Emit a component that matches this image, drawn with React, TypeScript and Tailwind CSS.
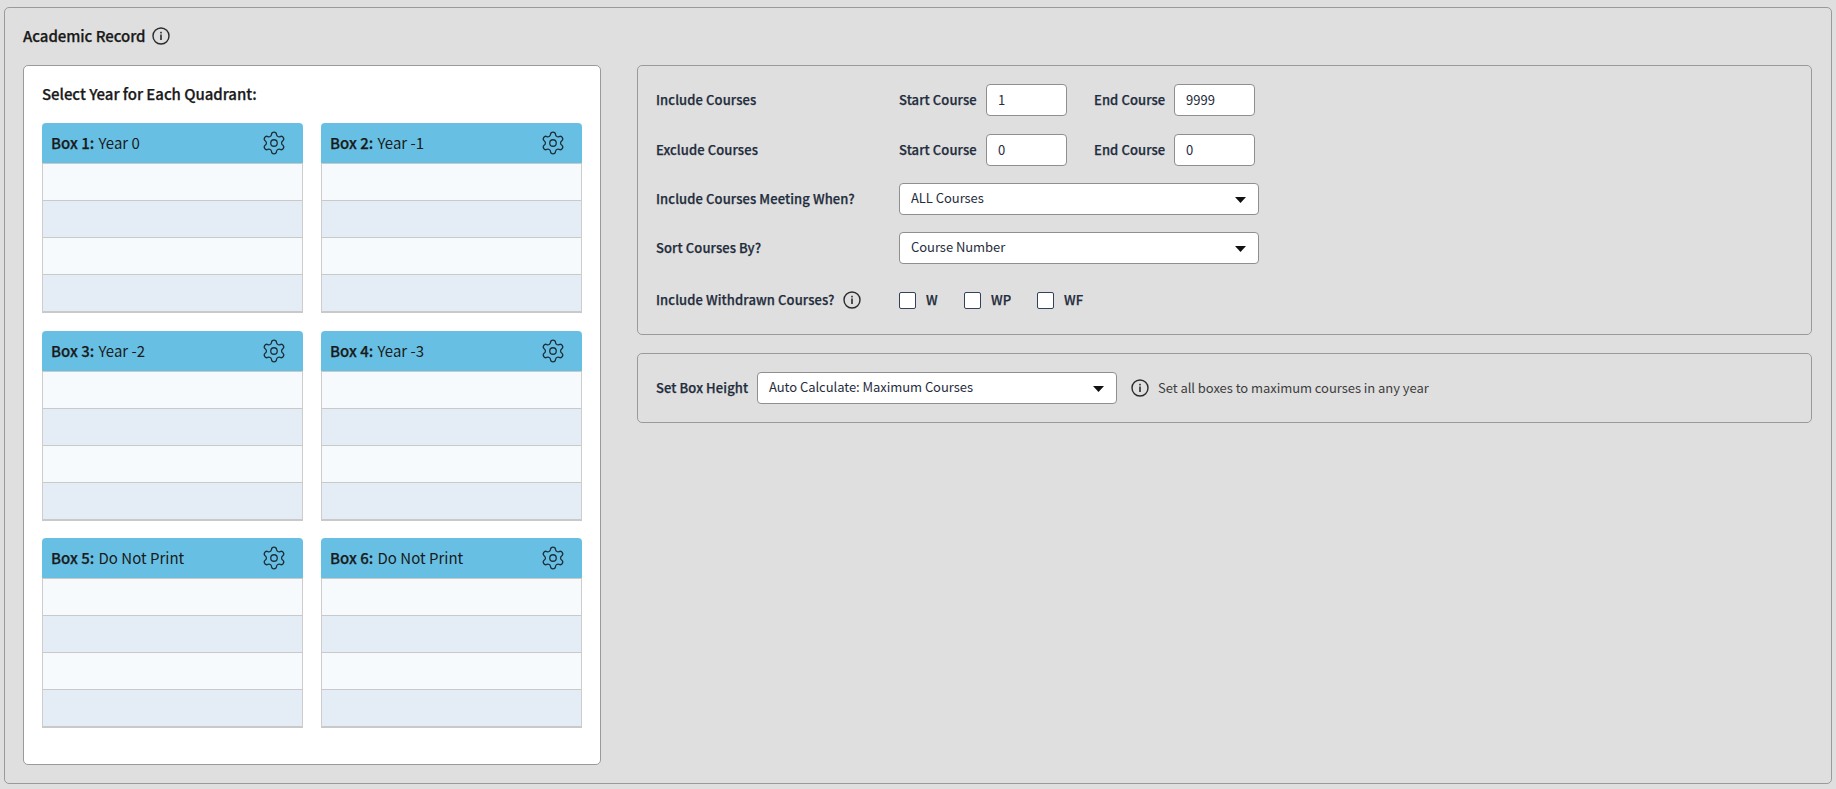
import React from 'react';
import { Settings } from 'lucide-react';

const font = 'font-["Noto_Sans_CJK_JP","Liberation_Sans",sans-serif]';

const boxes = [
  { name: 'Box 1:', value: 'Year 0' },
  { name: 'Box 2:', value: 'Year -1' },
  { name: 'Box 3:', value: 'Year -2' },
  { name: 'Box 4:', value: 'Year -3' },
  { name: 'Box 5:', value: 'Do Not Print' },
  { name: 'Box 6:', value: 'Do Not Print' },
];

const InfoIcon = () => (
  <svg width="18" height="18" viewBox="0 0 18 18" fill="none" className="shrink-0">
    <circle cx="9" cy="9" r="8" stroke="#2b2b2b" strokeWidth="1.4" />
    <rect x="8.2" y="7.5" width="1.6" height="5.5" fill="#2b2b2b" />
    <rect x="8.2" y="4.8" width="1.6" height="1.6" fill="#2b2b2b" />
  </svg>
);

const Caret = () => (
  <svg width="11" height="6" viewBox="0 0 11 6" className="shrink-0">
    <path d="M0 0h11L5.5 6z" fill="#111111" />
  </svg>
);

const QuadrantBox = ({ name, value }: { name: string; value: string }) => (
  <div className="h-[190px]">
    <div className="flex h-[40px] items-center justify-between rounded-t-[4px] bg-[#67c0e4] pl-[9px] pr-[16px] text-[15px] leading-[20px] text-[#1a1a1a]">
      <span>
        <span className="mr-[1px] font-medium [-webkit-text-stroke:0.25px]">{name}</span> {value}
      </span>
      <Settings size={26} strokeWidth={1.2} className="text-[#1f2f3a]" />
    </div>
    <div className="border-x border-b-2 border-x-[#cdcdcd] border-b-[#c9c9c9]">
      {[0, 1, 2, 3].map((i) => (
        <div key={i} className={`h-[37px] border-t border-[#c9c9c9] ${i % 2 === 0 ? 'bg-[#f6fafd]' : 'bg-[#e4ecf6]'}`} />
      ))}
    </div>
  </div>
);

const NumberInput = ({ value }: { value: string }) => (
  <div className="flex h-[32px] w-[81px] items-center rounded-[4px] border border-[#8f8f8f] bg-white pl-[11px] text-[13px] leading-[18px] text-[#1f2d3d]">
    {value}
  </div>
);

const Select = ({ value, className }: { value: string; className?: string }) => (
  <div className={`flex h-[32px] items-center justify-between rounded-[4px] border border-[#8f8f8f] bg-white pl-[11px] pr-[12px] text-[13px] leading-[18px] tracking-[-0.05px] text-[#1f2d3d] ${className || ''}`}>
    <span className="-mt-[3px]">{value}</span>
    <span className="mt-[2px]">
      <Caret />
    </span>
  </div>
);

const Label = ({ children, className }: { children: React.ReactNode; className?: string }) => (
  <span className={`text-[13px] font-medium leading-[18px] tracking-[0.1px] text-[#1f2d3d] [-webkit-text-stroke:0.25px] ${className || ''}`}>{children}</span>
);

const CourseRange = ({ label, start, end }: { label: string; start: string; end: string }) => (
  <div className="flex items-center">
    <Label className="w-[243px]">{label}</Label>
    <Label className="w-[87px]">Start Course</Label>
    <NumberInput value={start} />
    <Label className="ml-[27px] w-[80px]">End Course</Label>
    <NumberInput value={end} />
  </div>
);

const Check = ({ label, className }: { label: string; className: string }) => (
  <div className={`flex items-center ${className}`}>
    <div className="h-[17px] w-[17px] rounded-[2px] border border-[#33415c] bg-white" />
    <Label className="ml-[10px]">{label}</Label>
  </div>
);

export default function App() {
  return (
    <div className={`${font} h-[789px] w-[1836px] overflow-hidden bg-[#dfdfdf] px-[4px] pt-[7px]`}>
      <div className="h-[777px] rounded-[5px] border border-[#9a9a9a] pl-[18px] pr-[19px] pt-[17px]">
        <div className="flex h-[22px] items-center gap-[6px]">
          <span className="text-[15px] font-medium leading-[20px] tracking-[-0.05px] text-[#1a1a1a] [-webkit-text-stroke:0.25px]">Academic Record</span>
          <InfoIcon />
        </div>
        <div className="mt-[18px] flex items-start gap-[36px]">
          <div className="h-[700px] w-[578px] shrink-0 rounded-[5px] border border-[#9a9a9a] bg-white px-[18px] pt-[18px]">
            <div className="text-[15px] font-medium leading-[20px] tracking-[-0.05px] text-[#1a1a1a] [-webkit-text-stroke:0.25px]">Select Year for Each Quadrant:</div>
            <div className="mt-[19px] grid grid-cols-[261px_261px] gap-x-[18px] gap-y-[17.5px]">
              {boxes.map((box) => (
                <QuadrantBox key={box.name} name={box.name} value={box.value} />
              ))}
            </div>
          </div>
          <div className="flex-1">
            <div className="h-[270px] rounded-[5px] border border-[#9a9a9a] pl-[18px] pt-[18px]">
              <CourseRange label="Include Courses" start="1" end="9999" />
              <div className="mt-[18px]">
                <CourseRange label="Exclude Courses" start="0" end="0" />
              </div>
              <div className="mt-[17px] flex items-center">
                <Label className="w-[243px]">Include Courses Meeting When?</Label>
                <Select value="ALL Courses" className="w-[360px]" />
              </div>
              <div className="mt-[17px] flex items-center">
                <Label className="w-[243px]">Sort Courses By?</Label>
                <Select value="Course Number" className="w-[360px]" />
              </div>
              <div className="mt-[27px] flex h-[18px] items-center">
                <div className="flex w-[243px] items-center gap-[8px]">
                  <Label>Include Withdrawn Courses?</Label>
                  <InfoIcon />
                </div>
                <Check label="W" className="w-[65px]" />
                <Check label="WP" className="w-[73px]" />
                <Check label="WF" className="w-[60px]" />
              </div>
            </div>
            <div className="mt-[18px] flex h-[70px] items-center rounded-[5px] border border-[#9a9a9a] pl-[18px]">
              <Label className="w-[101px]">Set Box Height</Label>
              <Select value="Auto Calculate: Maximum Courses" className="w-[360px]" />
              <span className="ml-[14px]">
                <InfoIcon />
              </span>
              <span className="ml-[9px] text-[13px] leading-[18px] tracking-[-0.05px] text-[#3d3d3d]">Set all boxes to maximum courses in any year</span>
            </div>
          </div>
        </div>
      </div>
    </div>
  );
}
